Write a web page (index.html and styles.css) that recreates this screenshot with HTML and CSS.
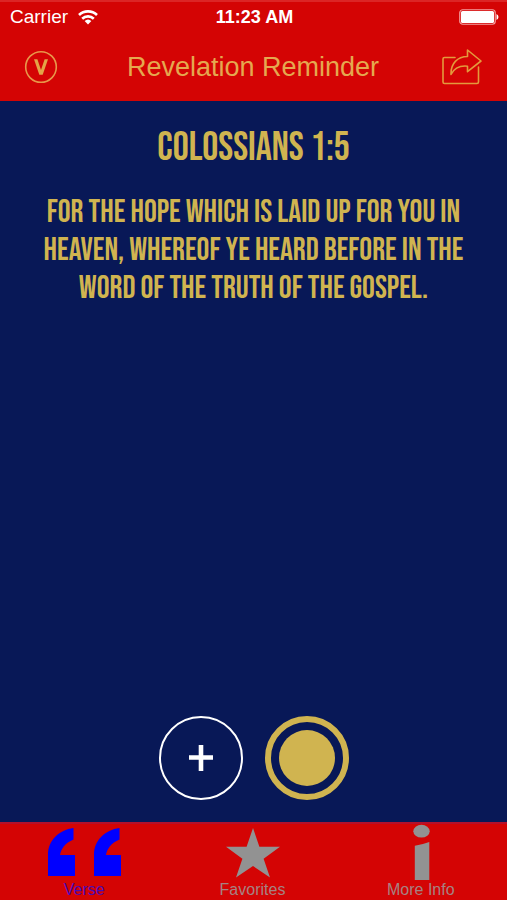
FILE: index.html
```html
<!DOCTYPE html>
<html lang="en">
<head>
<meta charset="utf-8">
<meta name="viewport" content="width=device-width, initial-scale=1">
<title>Revelation Reminder</title>
<link rel="stylesheet" href="styles.css">
</head>
<body>
<header class="top">
  <div class="status">
    <div class="carrier">
      <span>Carrier</span>
      <svg width="20" height="15" viewBox="0 0 20 15" aria-hidden="true">
        <g fill="none" stroke="#fff" stroke-width="2.6">
          <path d="M1 5 A13 13 0 0 1 19 5"/>
          <path d="M4.2 8.7 A8.3 8.3 0 0 1 15.8 8.7"/>
        </g>
        <path d="M6.6 11 Q10 8 13.4 11 L10 14.6 Z" fill="#fff"/>
      </svg>
    </div>
    <span class="clock">11:23 AM</span>
    <svg class="battery" width="40" height="16" viewBox="0 0 40 16" aria-hidden="true">
      <rect x=".75" y=".75" width="35.5" height="14.5" rx="3" fill="none" stroke="#f3a0a0" stroke-width="1.2"/>
      <rect x="2" y="2" width="33" height="12" rx="1.5" fill="#fff"/>
      <path d="M37.5 5 Q39.5 6 39.5 8 Q39.5 10 37.5 11 Z" fill="#fff"/>
    </svg>
  </div>
  <nav class="bar">
    <button class="icon-button" type="button" aria-label="Version">
      <svg width="34" height="34" viewBox="0 0 34 34" aria-hidden="true">
        <circle cx="17" cy="17" r="15.3" fill="none" stroke="#e8974a" stroke-width="1.6"/>
        <path d="M10 9.3 H13.4 L17 20 L20.6 9.3 H24 L18.7 24.7 H15.3 Z" fill="#e3a548"/>
      </svg>
    </button>
    <h1 class="title">Revelation Reminder</h1>
    <button class="icon-button" type="button" aria-label="Share">
      <svg width="40" height="36" viewBox="0 0 40 36" aria-hidden="true">
        <g fill="none" stroke="#e39a3c" stroke-width="1.6" stroke-linejoin="round" stroke-linecap="round">
          <path d="M13 8.5 H2.5 Q1 8.5 1 10 V33 Q1 34.5 2.5 34.5 H35 Q36.5 34.5 36.5 33 V18"/>
          <path d="M25.5 1 L39 12 L25.5 22.7 V17.2 C17.5 16.4 12.5 18.5 9 25.5 C8.6 14.5 15.5 7.5 25.5 7.5 Z"/>
        </g>
      </svg>
    </button>
  </nav>
</header>
<main class="verse">
  <h2 class="reference">COLOSSIANS 1:5</h2>
  <p class="passage">FOR THE HOPE WHICH IS LAID UP FOR YOU IN<br>HEAVEN, WHEREOF YE HEARD BEFORE IN THE<br>WORD OF THE TRUTH OF THE GOSPEL.</p>
  <div class="actions">
    <button class="round add" type="button" aria-label="Add">
      <svg width="26" height="28" viewBox="0 0 26 28" aria-hidden="true"><path d="M13 1 V27 M1 13.5 H25" stroke="#fff" stroke-width="4.6"/></svg>
    </button>
    <button class="round record" type="button" aria-label="New verse"><span class="disc"></span></button>
  </div>
</main>
<nav class="tabs">
  <a class="tab active" href="#verse">
    <svg width="74" height="56" viewBox="0 0 74 56" aria-hidden="true">
      <g fill="#0000ff">
        <path d="M26.5 4 V15.5 C18 19 14 25 13 31 H28 V52 H1 V31 C1 16 12 6 26.5 4 Z"/>
        <path d="M72.5 4 V15.5 C64 19 60 25 59 31 H74 V52 H47 V31 C47 16 58 6 72.5 4 Z"/>
      </g>
    </svg>
    <span>Verse</span>
  </a>
  <a class="tab" href="#favorites">
    <svg width="56" height="56" viewBox="0 0 56 56" aria-hidden="true"><path fill="#929292" d="M29 4 L35.4 22.7 H56 L39.6 34.7 L46 53.5 L29 42 L12 53.5 L18.4 34.7 L2 22.7 H22.6 Z"/></svg>
    <span>Favorites</span>
  </a>
  <a class="tab" href="#info">
    <svg width="18" height="56" viewBox="0 0 18 56" aria-hidden="true">
      <g fill="#929292"><ellipse cx="9.5" cy="7.2" rx="8.2" ry="6.4"/><path d="M2.8 21.8 Q10.5 20.5 17.3 18 V56 H2.8 Z"/></g>
    </svg>
    <span>More Info</span>
  </a>
</nav>
</body>
</html>
```
FILE: styles.css
```css
* { box-sizing: border-box; }

body {
  margin: 0;
  min-height: 100vh;
  display: flex;
  flex-direction: column;
  background: #081857;
  color: #d0b450;
  font-family: "Liberation Sans", Arial, sans-serif;
}

button {
  padding: 0;
  border: 0;
  background: none;
  color: inherit;
}

svg { display: block; flex: none; }

.top {
  background: #d40404;
  border-top: 2px solid #dc2525;
}

.status {
  display: grid;
  grid-template-columns: 1fr auto 1fr;
  align-items: center;
  height: 30px;
  padding: 0 8px 0 10px;
  color: #fff;
  font-size: 19px;
}

.carrier {
  display: flex;
  align-items: center;
  gap: 10px;
}

.clock { font-weight: bold; font-size: 18px; }
.battery { justify-self: end; }

.bar {
  display: grid;
  grid-template-columns: 1fr auto 1fr;
  align-items: center;
  height: 69px;
  padding: 0 25px 0 24px;
}

.icon-button { justify-self: start; }
.icon-button:last-child { justify-self: end; }

.title {
  margin: 0;
  color: #e5a84f;
  font-size: 27px;
  font-weight: normal;
  line-height: 32px;
}

.verse {
  flex: 1;
  display: flex;
  flex-direction: column;
  align-items: center;
  padding: 27px 16px 22px;
  font-family: "Bebas Neue", "Liberation Sans Narrow", sans-serif;
  text-align: center;
}

.reference {
  margin: 0;
  font-size: 40px;
  font-weight: normal;
  line-height: 40px;
}

.passage {
  margin: 26px 0 0;
  font-size: 32px;
  line-height: 38px;
  white-space: nowrap;
}

.actions {
  display: flex;
  gap: 22px;
  margin-top: auto;
}

.round {
  display: flex;
  align-items: center;
  justify-content: center;
  width: 84px;
  height: 84px;
  border-radius: 50%;
}

.add { border: 2px solid #fff; }
.record { border: 6px solid #d0b450; }

.disc {
  width: 56px;
  height: 56px;
  border-radius: 50%;
  background: #d0b450;
}

.tabs {
  display: grid;
  grid-template-columns: repeat(3, 1fr);
  height: 78px;
  padding-right: 2px;
  background: #d40404;
  border-top: 2px solid #b5102a;
}

.tab {
  display: flex;
  flex-direction: column;
  align-items: center;
  color: #a68282;
  font-size: 16px;
  line-height: 20px;
  text-decoration: none;
}

.active { color: #4a0cb8; }
```
